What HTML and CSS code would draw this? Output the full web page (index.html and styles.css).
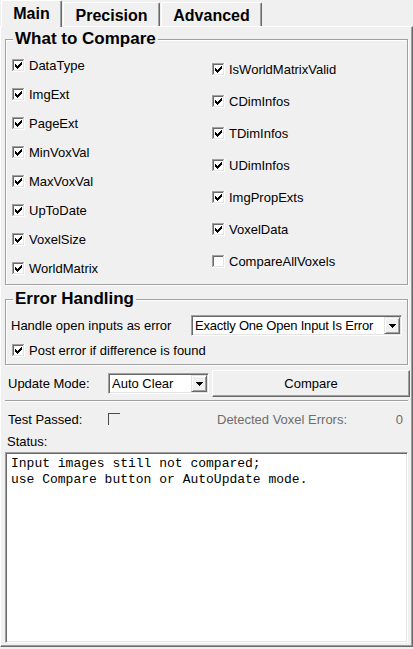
FILE: index.html
```html
<!DOCTYPE html>
<html>
<head>
<meta charset="utf-8">
<link rel="stylesheet" href="styles.css">
</head>
<body>
<svg class="defs" width="0" height="0" aria-hidden="true">
  <symbol id="cb-off" viewBox="0 0 13 13" shape-rendering="crispEdges">
    <rect width="13" height="13" fill="#fff"/>
    <path d="M0 0h12v1H1v11H0z" fill="#a0a0a0"/>
    <path d="M1 1h10v1H2v9H1z" fill="#696969"/>
    <path d="M11 1h1v11H1v-1h10z" fill="#e3e3e3"/>
  </symbol>
  <symbol id="cb-on" viewBox="0 0 13 13" shape-rendering="crispEdges">
    <rect width="13" height="13" fill="#fff"/>
    <path d="M0 0h12v1H1v11H0z" fill="#a0a0a0"/>
    <path d="M1 1h10v1H2v9H1z" fill="#696969"/>
    <path d="M11 1h1v11H1v-1h10z" fill="#e3e3e3"/>
    <g fill="#000">
      <rect x="9" y="3" width="1" height="3"/>
      <rect x="8" y="4" width="1" height="3"/>
      <rect x="7" y="5" width="1" height="3"/>
      <rect x="6" y="6" width="1" height="3"/>
      <rect x="5" y="7" width="1" height="3"/>
      <rect x="4" y="6" width="1" height="3"/>
      <rect x="3" y="5" width="1" height="3"/>
    </g>
  </symbol>
  <symbol id="cb-flat" viewBox="0 0 13 13" shape-rendering="crispEdges">
    <path d="M0 0h12v1H1v11H0z" fill="#4a4a4a"/>
  </symbol>
  <symbol id="tri" viewBox="0 0 7 4" shape-rendering="crispEdges">
    <rect x="0" y="0" width="7" height="1"/>
    <rect x="1" y="1" width="5" height="1"/>
    <rect x="2" y="2" width="3" height="1"/>
    <rect x="3" y="3" width="1" height="1"/>
  </symbol>
</svg>

<div class="tabbar">
  <div class="tab tab-main active">Main</div>
  <div class="tab tab-prec">Precision</div>
  <div class="tab tab-adv">Advanced</div>
</div>

<div class="panel">
  <div class="group g-compare">
    <span class="gtitle">What to Compare</span>
    <div class="cols">
      <div class="col col-left">
        <div class="cbrow"><svg class="cb"><use href="#cb-on"/></svg><span>DataType</span></div>
        <div class="cbrow"><svg class="cb"><use href="#cb-on"/></svg><span>ImgExt</span></div>
        <div class="cbrow"><svg class="cb"><use href="#cb-on"/></svg><span>PageExt</span></div>
        <div class="cbrow"><svg class="cb"><use href="#cb-on"/></svg><span>MinVoxVal</span></div>
        <div class="cbrow"><svg class="cb"><use href="#cb-on"/></svg><span>MaxVoxVal</span></div>
        <div class="cbrow"><svg class="cb"><use href="#cb-on"/></svg><span>UpToDate</span></div>
        <div class="cbrow"><svg class="cb"><use href="#cb-on"/></svg><span>VoxelSize</span></div>
        <div class="cbrow"><svg class="cb"><use href="#cb-on"/></svg><span>WorldMatrix</span></div>
      </div>
      <div class="col col-right">
        <div class="cbrow"><svg class="cb"><use href="#cb-on"/></svg><span>IsWorldMatrixValid</span></div>
        <div class="cbrow"><svg class="cb"><use href="#cb-on"/></svg><span>CDimInfos</span></div>
        <div class="cbrow"><svg class="cb"><use href="#cb-on"/></svg><span>TDimInfos</span></div>
        <div class="cbrow"><svg class="cb"><use href="#cb-on"/></svg><span>UDimInfos</span></div>
        <div class="cbrow"><svg class="cb"><use href="#cb-on"/></svg><span>ImgPropExts</span></div>
        <div class="cbrow"><svg class="cb"><use href="#cb-on"/></svg><span>VoxelData</span></div>
        <div class="cbrow"><svg class="cb"><use href="#cb-off"/></svg><span>CompareAllVoxels</span></div>
      </div>
    </div>
  </div>

  <div class="group g-error">
    <span class="gtitle">Error Handling</span>
    <div class="eh-row">
      <span>Handle open inputs as error</span>
      <div class="combo combo-eh"><span class="combo-text">Exactly One Open Input Is Error</span><span class="drop"><svg class="tri"><use href="#tri"/></svg></span></div>
    </div>
    <div class="cbrow eh-check"><svg class="cb"><use href="#cb-on"/></svg><span>Post error if difference is found</span></div>
  </div>

  <div class="update-row">
    <span class="um-label">Update Mode:</span>
    <div class="combo combo-um"><span class="combo-text">Auto Clear</span><span class="drop"><svg class="tri"><use href="#tri"/></svg></span></div>
    <div class="button">Compare</div>
  </div>

  <div class="sep"></div>

  <div class="test-row">
    <span class="tp-label">Test Passed:</span>
    <svg class="cb"><use href="#cb-flat"/></svg>
    <span class="muted dve">Detected Voxel Errors:</span>
    <span class="muted zero">0</span>
  </div>

  <div class="status-label">Status:</div>
  <div class="status">Input images still not compared;<br>use Compare button or AutoUpdate mode.</div>
</div>
</body>
</html>
```

FILE: styles.css
```css
html, body {
  margin: 0;
  padding: 0;
}
body {
  width: 413px;
  height: 649px;
  overflow: hidden;
  background: #f0f0f0;
  font-family: "Liberation Sans", Arial, sans-serif;
  font-size: 13px;
  color: #000;
}
.defs {
  position: absolute;
  width: 0;
  height: 0;
  overflow: hidden;
}

/* Tabs */
.tabbar {
  display: flex;
  align-items: flex-end;
  height: 26px;
  padding-left: 1px;
}
.tab {
  box-sizing: border-box;
  height: 24px;
  margin-right: 1px;
  display: flex;
  align-items: center;
  justify-content: center;
  font-weight: bold;
  font-size: 16px;
  border-left: 1px solid #fff;
  border-top: 1px solid #fff;
  border-right: 1px solid #696969;
  box-shadow: inset -1px 0 0 #a0a0a0;
  border-radius: 2px 2px 0 0;
  padding-top: 2px;
}
.tab-main { width: 61px; }
.tab-prec { width: 97px; }
.tab-adv { width: 101px; }
.tab.active {
  height: 27px;
  margin-bottom: -1px;
  position: relative;
  z-index: 1;
  background: #f0f0f0;
  padding-top: 0;
}

/* Panel */
.panel {
  box-sizing: border-box;
  height: 621px;
  border-top: 1px solid #fff;
  border-left: 1px solid #fff;
  border-right: 1px solid #696969;
  border-bottom: 1px solid #696969;
  box-shadow: inset -1px -1px 0 #a0a0a0;
  padding: 0 4px 3px 4px;
  display: flex;
  flex-direction: column;
}

/* Group boxes */
.group {
  position: relative;
  box-sizing: border-box;
  border: 1px solid #a0a0a0;
  box-shadow: 1px 1px 0 #fff, inset 1px 1px 0 #fff;
}
.gtitle {
  position: absolute;
  top: -11px;
  left: 7px;
  padding: 0 2px;
  background: #f0f0f0;
  font-weight: bold;
  font-size: 17px;
  line-height: 20px;
}
.g-compare {
  margin-top: 12px;
  height: 246px;
}
.cols {
  display: grid;
  grid-template-columns: 200px 1fr;
  padding-left: 6px;
}
.col-left { padding-top: 11px; }
.col-right { padding-top: 13px; }
.col-left .cbrow { height: 29px; }
.col-right .cbrow { height: 32px; }

.cbrow {
  display: flex;
  align-items: center;
  gap: 4px;
}
.cb {
  width: 13px;
  height: 13px;
  flex: none;
  display: block;
}

.g-error {
  margin-top: 14px;
  height: 66px;
  padding: 15px 5px 0 5px;
}
.eh-row {
  display: flex;
  align-items: center;
  justify-content: space-between;
  height: 21px;
}
.eh-check {
  margin-top: 8px;
  height: 13px;
  padding-left: 1px;
}

/* Combobox */
.combo {
  box-sizing: border-box;
  height: 21px;
  display: flex;
  align-items: stretch;
  background: #fff;
  border-top: 1px solid #a0a0a0;
  border-left: 1px solid #a0a0a0;
  border-right: 1px solid #fff;
  border-bottom: 1px solid #fff;
  box-shadow: inset 1px 1px 0 #696969, inset -1px -1px 0 #e3e3e3;
  padding: 1px;
}
.combo-eh { width: 211px; }
.combo-eh .combo-text { letter-spacing: -0.2px; }
.combo-um { width: 101px; }
.combo-text {
  flex: 1;
  display: flex;
  align-items: center;
  padding-left: 2px;
  white-space: nowrap;
  overflow: hidden;
}
.drop {
  box-sizing: border-box;
  width: 16px;
  flex: none;
  display: flex;
  align-items: center;
  justify-content: center;
  background: #f0f0f0;
  border-top: 1px solid #e3e3e3;
  border-left: 1px solid #e3e3e3;
  border-right: 1px solid #696969;
  border-bottom: 1px solid #696969;
  box-shadow: inset 1px 1px 0 #fff, inset -1px -1px 0 #a0a0a0;
}
.tri {
  width: 7px;
  height: 4px;
  display: block;
  fill: #000;
}

/* Update row */
.update-row {
  margin-top: 5px;
  height: 27px;
  display: flex;
  align-items: center;
  padding-left: 3px;
}
.um-label { width: 100px; flex: none; }
.button {
  flex: 1;
  align-self: stretch;
  margin-left: 3px;
  margin-right: -2px;
  box-sizing: border-box;
  display: flex;
  align-items: center;
  justify-content: center;
  border-top: 1px solid #fff;
  border-left: 1px solid #fff;
  border-right: 1px solid #696969;
  border-bottom: 1px solid #696969;
  box-shadow: inset -1px -1px 0 #a0a0a0;
}

.sep {
  margin-top: 3px;
  border-top: 1px solid #a0a0a0;
  border-bottom: 1px solid #fff;
}

/* Test row */
.test-row {
  margin-top: 11px;
  height: 13px;
  display: flex;
  align-items: center;
  padding-left: 3px;
  padding-right: 5px;
}
.tp-label { width: 100px; flex: none; }
.muted { color: #6d6d6d; }
.dve { margin-left: 96px; }
.zero { margin-left: auto; }

.status-label {
  margin-top: 8px;
  line-height: 16px;
  padding-left: 2px;
}
.status {
  margin-top: 2px;
  flex: 1;
  background: #fff;
  border-top: 1px solid #a0a0a0;
  border-left: 1px solid #a0a0a0;
  border-right: 1px solid #fff;
  border-bottom: 1px solid #fff;
  box-shadow: inset 1px 1px 0 #696969, inset -1px -1px 0 #e3e3e3;
  padding: 3px 5px 2px 5px;
  font-family: "Liberation Mono", "Courier New", monospace;
  font-size: 13px;
  line-height: 16px;
}
```
